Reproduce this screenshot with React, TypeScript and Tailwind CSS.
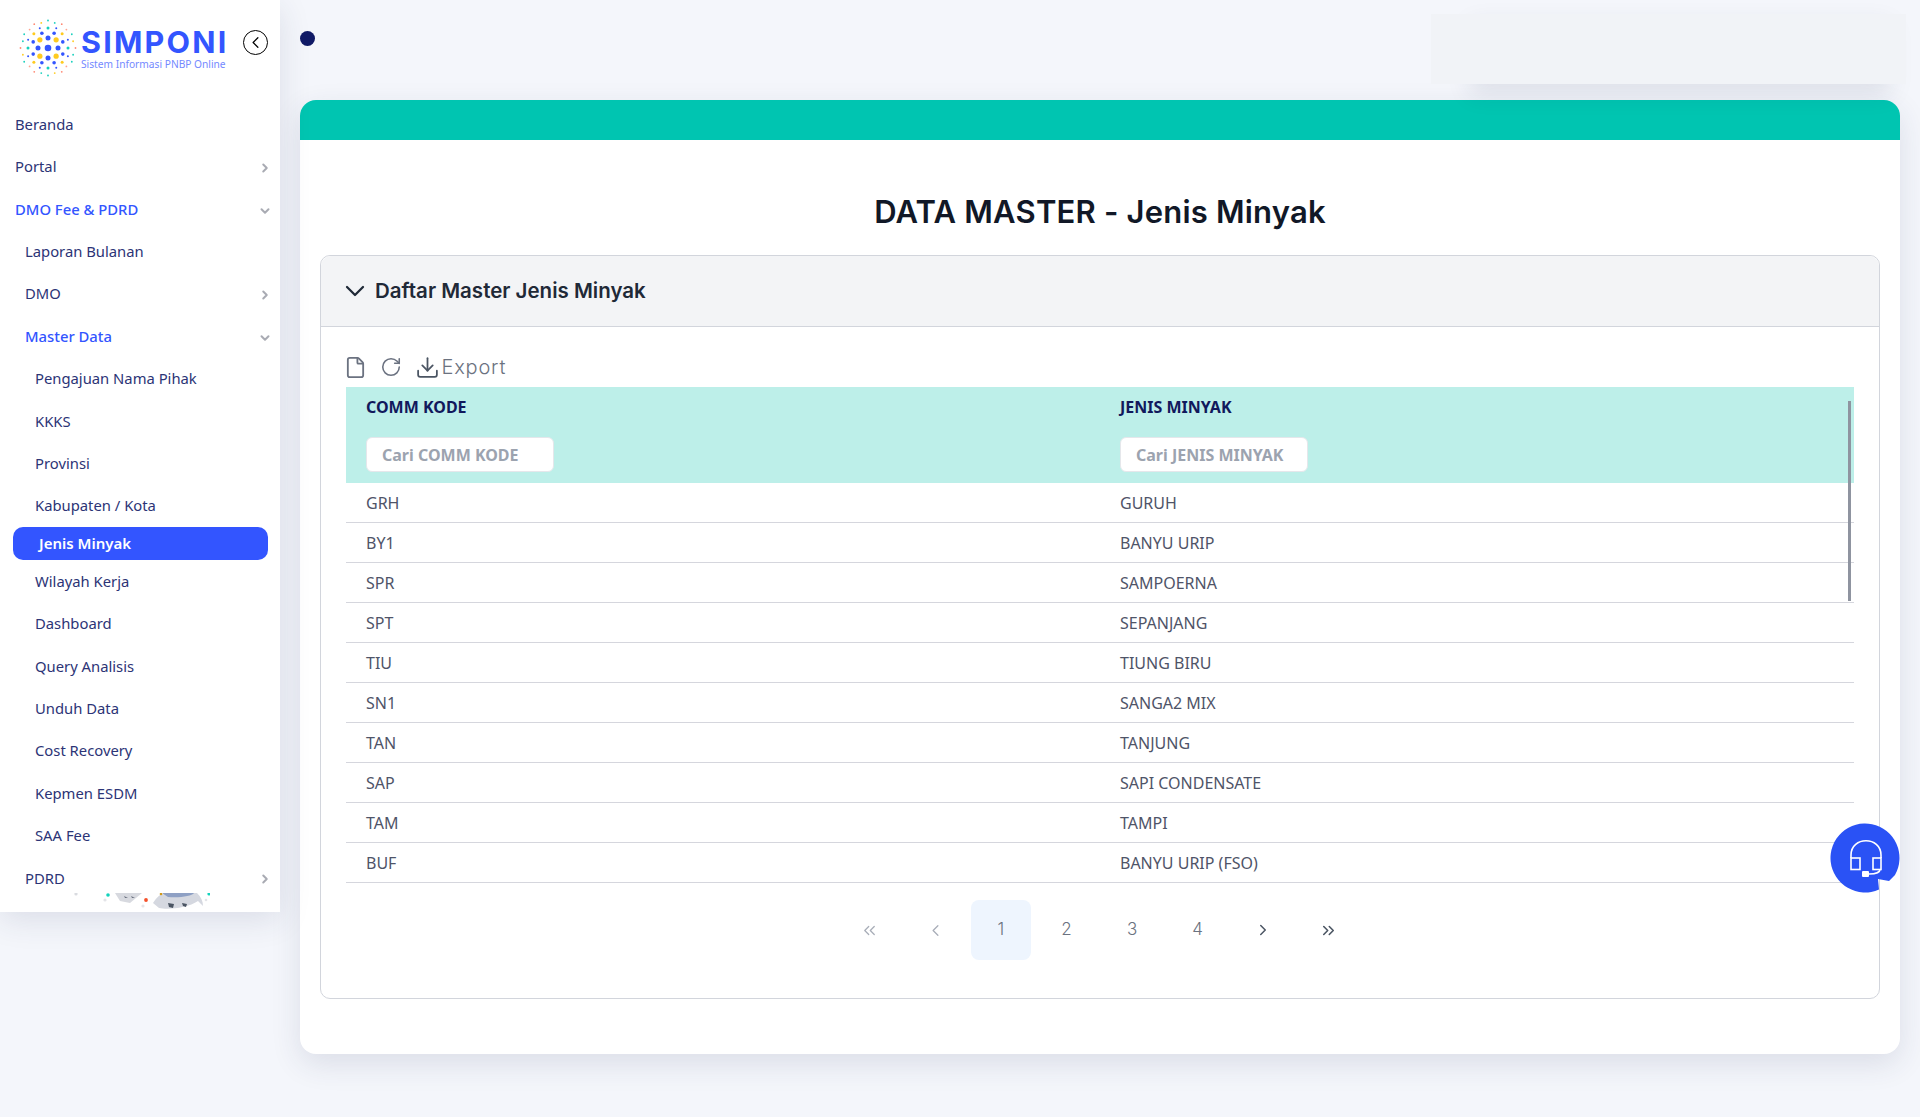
import { ChevronDown, ChevronLeft, ChevronRight, ChevronsLeft, ChevronsRight, Download, File, RotateCw } from "lucide-react";

const rows = [
  ["GRH", "GURUH"],
  ["BY1", "BANYU URIP"],
  ["SPR", "SAMPOERNA"],
  ["SPT", "SEPANJANG"],
  ["TIU", "TIUNG BIRU"],
  ["SN1", "SANGA2 MIX"],
  ["TAN", "TANJUNG"],
  ["SAP", "SAPI CONDENSATE"],
  ["TAM", "TAMPI"],
  ["BUF", "BANYU URIP (FSO)"],
];

const rings = [
  { r: 10, n: 4, size: 2.5, start: 0, colors: ["#3355ff"] },
  { r: 11.5, n: 4, size: 2.6, start: 45, colors: ["#ffcb1f"] },
  { r: 16, n: 8, size: 1.8, start: 22.5, colors: ["#3355ff"] },
  { r: 20, n: 4, size: 1.5, start: 0, colors: ["#18d0bd"] },
  { r: 20, n: 4, size: 1.5, start: 45, colors: ["#ffcb1f"] },
  { r: 21.5, n: 8, size: 1, start: 22.5, colors: ["#3355ff"] },
  { r: 26, n: 12, size: 0.9, start: 15, colors: ["#18d0bd", "#ffa48f", "#ffcb1f"] },
  { r: 27.5, n: 12, size: 0.9, start: 0, colors: ["#ff8a75", "#18d0bd"] },
];

function LogoMark() {
  return (
    <svg width="60" height="60" viewBox="-30 -30 60 60" className="shrink-0">
      <circle cx="0" cy="0" r="3.3" fill="#3355ff" />
      {rings.map((ring) =>
        Array.from({ length: ring.n }).map((_, i) => {
          const a = ((ring.start + (360 / ring.n) * i) * Math.PI) / 180;
          return (
            <circle
              key={`${ring.r}-${ring.start}-${i}`}
              cx={ring.r * Math.cos(a)}
              cy={ring.r * Math.sin(a)}
              r={ring.size}
              fill={ring.colors[i % ring.colors.length]}
            />
          );
        })
      )}
    </svg>
  );
}

function Fish() {
  return (
    <svg width="140" height="19" viewBox="0 0 140 19" className="absolute left-[70px] top-0">
      <circle cx="6" cy="1" r="1.6" fill="#d9dbe0" />
      <circle cx="38" cy="2" r="1.8" fill="#14d3bd" />
      <circle cx="35" cy="7" r="1.6" fill="#e3e4e8" />
      <path d="M45 0 L72 0 L66 5 L60 10 L50 8 Z" fill="#d7d9df" />
      <path d="M54 3 L58 5 L55 5 Z M61 3 L65 5 L62 5 Z" fill="#6b7280" />
      <circle cx="76" cy="7" r="1.9" fill="#f4502a" />
      <circle cx="73" cy="13" r="1.6" fill="#e3e4e8" />
      <path d="M83 10 C86 5 90 1 95 0 L127 0 C131 4 133 8 133 13 L128 8 C118 15 98 17 89 15 Z" fill="#d5d8e0" />
      <path d="M92 0 L124 0 C122 3 110 5 98 4 Z" fill="#8ea0c4" />
      <path d="M98 10 L104 11 L103 15 L99 14 Z M112 10 L117 11 L116 14 L113 13 Z" fill="#4b5563" />
      <circle cx="91" cy="1" r="1.3" fill="#d19a1a" />
      <circle cx="139" cy="1" r="1.6" fill="#14d3bd" />
      <circle cx="136" cy="7" r="1.3" fill="#e3e4e8" />
    </svg>
  );
}

function Item({ label, pad, active, chevron }: { label: string; pad: string; active?: boolean; chevron?: "right" | "down" }) {
  return (
    <div className={`flex h-[42.4px] items-center justify-between pr-[8px] text-[14.8px] ${pad} ${active ? "font-medium text-[#3355ff]" : "text-[#2c3476]"}`}>
      <span>{label}</span>
      {chevron === "right" && <ChevronRight className="mt-[3px] h-[14px] w-[14px] text-[#a9abb3]" strokeWidth={3.4} />}
      {chevron === "down" && <ChevronDown className="mt-[5px] h-[14px] w-[14px] text-[#a9abb3]" strokeWidth={3.4} />}
    </div>
  );
}

function Sidebar() {
  return (
    <aside className="relative h-[912px] w-[280px] shrink-0 overflow-hidden bg-white shadow-[0_8px_30px_rgba(40,50,90,0.12)]">
      <div className="flex h-[102.8px] items-start pl-[18px] pt-[18px]">
        <LogoMark />
        <div className="ml-[3px] mt-[8px] w-[148px]">
          <div className="text-[30.5px] font-bold leading-[32px] tracking-[2.2px] text-[#3355ff]" style={{ fontFamily: "Inter, sans-serif" }}>SIMPONI</div>
          <div className="whitespace-nowrap text-[10.2px] leading-[13px] text-[#7489ff]">Sistem Informasi PNBP Online</div>
        </div>
        <div className="absolute left-[243px] top-[30px] flex h-[25px] w-[25px] items-center justify-center rounded-full border-[1.5px] border-black">
          <ChevronLeft className="h-[19px] w-[19px] text-black" strokeWidth={1.6} />
        </div>
      </div>
      <nav>
        <Item label="Beranda" pad="pl-[15px]" />
        <Item label="Portal" pad="pl-[15px]" chevron="right" />
        <Item label="DMO Fee & PDRD" pad="pl-[15px]" active chevron="down" />
        <Item label="Laporan Bulanan" pad="pl-[25px]" />
        <Item label="DMO" pad="pl-[25px]" chevron="right" />
        <Item label="Master Data" pad="pl-[25px]" active chevron="down" />
        <Item label="Pengajuan Nama Pihak" pad="pl-[35px]" />
        <Item label="KKKS" pad="pl-[35px]" />
        <Item label="Provinsi" pad="pl-[35px]" />
        <Item label="Kabupaten / Kota" pad="pl-[35px]" />
        <div className="mx-[13px] flex h-[33px] w-[255px] items-center rounded-[10px] bg-[#3355ff] pl-[26px] text-[15px] font-semibold text-white">Jenis Minyak</div>
        <Item label="Wilayah Kerja" pad="pl-[35px]" />
        <Item label="Dashboard" pad="pl-[35px]" />
        <Item label="Query Analisis" pad="pl-[35px]" />
        <Item label="Unduh Data" pad="pl-[35px]" />
        <Item label="Cost Recovery" pad="pl-[35px]" />
        <Item label="Kepmen ESDM" pad="pl-[35px]" />
        <Item label="SAA Fee" pad="pl-[35px]" />
        <Item label="PDRD" pad="pl-[25px]" chevron="right" />
      </nav>
      <div className="absolute bottom-0 left-0 h-[19px] w-full">
        <Fish />
      </div>
    </aside>
  );
}

function ChatButton() {
  return (
    <svg width="70" height="70" viewBox="0 0 70 70" className="absolute left-[1830px] top-[823px]">
      <path d="M65 52 A34.5 34.5 0 1 0 49 66.5 L48 56 L59 58 Z" fill="#2a52f5" />
      <g fill="none" stroke="#fff" strokeWidth="1.6">
        <path d="M21 35 V32 C21 13 51 13 51 32 V35" />
        <rect x="21" y="35" width="9" height="11.5" />
        <rect x="43" y="35" width="8" height="11.5" />
        <path d="M50 46.5 C50 49 46 51 39 51" />
      </g>
      <rect x="32" y="48" width="7" height="6" rx="1" fill="#fff" />
    </svg>
  );
}

function Pager() {
  const cell = "flex h-[60px] w-[60px] items-center justify-center rounded-[8px] text-[#6b7280]";
  return (
    <div className="flex justify-center gap-[5.6px] pr-[1.5px] pt-[17px] text-[17px]" style={{ fontFamily: "Inter, sans-serif", fontWeight: 300 }}>
      <div className={`${cell} text-[#a8adb8]`}><ChevronsLeft className="h-[19px] w-[19px]" strokeWidth={1.6} /></div>
      <div className={`${cell} text-[#a8adb8]`}><ChevronLeft className="h-[19px] w-[19px]" strokeWidth={1.6} /></div>
      <div className={`${cell} bg-[#eef5fe]`}>1</div>
      <div className={cell}>2</div>
      <div className={cell}>3</div>
      <div className={cell}>4</div>
      <div className={cell}><ChevronRight className="h-[18px] w-[18px] text-[#4b5563]" strokeWidth={2} /></div>
      <div className={cell}><ChevronsRight className="h-[19px] w-[19px] text-[#4b5563]" strokeWidth={2} /></div>
    </div>
  );
}

export default function App() {
  return (
    <div className="relative flex min-h-[1117px] bg-[#f4f6fb]" style={{ fontFamily: "'Noto Sans', sans-serif" }}>
      <Sidebar />
      <main className="w-[1640px] shrink-0 pl-[20px] pr-[20px]">
        <div className="relative flex h-[100px] items-start">
          <div className="mt-[31px] h-[15px] w-[15px] rounded-full bg-[#101a66]" />
          <div className="absolute left-[1170px] top-[14px] h-[70px] w-[420px] bg-[#f1f3f7] shadow-[0_10px_24px_rgba(30,40,80,0.1)]" />
          <div className="absolute left-[1131px] top-[14px] h-[70px] w-[475px] bg-[#f1f3f7]" />
        </div>
        <section className="h-[954px] w-[1600px] overflow-hidden rounded-[16px] bg-white shadow-[0_10px_30px_rgba(40,50,90,0.12)]">
          <div className="h-[40px] bg-[#00c5b1]" />
          <h1 className="pb-[23px] pt-[52px] text-center text-[31px] font-semibold leading-[40px] tracking-[0.2px] text-[#111827]" style={{ fontFamily: "Inter, sans-serif" }}>
            DATA MASTER - Jenis Minyak
          </h1>
          <div className="mx-[20px] h-[744px] w-[1560px] rounded-[10px] border border-[#d2d5dc]">
            <div className="flex h-[71px] items-center gap-[4px] rounded-t-[10px] border-b border-[#d2d5dc] bg-[#f3f4f6] pl-[18px] text-[20.5px] font-semibold text-[#1f2937]" style={{ fontFamily: "Inter, sans-serif" }}>
              <ChevronDown className="h-[32px] w-[32px]" strokeWidth={1.7} />
              Daftar Master Jenis Minyak
            </div>
            <div className="relative px-[25px]">
              <div className="-ml-[2.5px] flex h-[60px] items-center gap-[13px] pt-[20px] text-[#6b7280]">
                <File className="h-[23px] w-[23px]" strokeWidth={1.9} />
                <RotateCw className="h-[22px] w-[22px]" strokeWidth={1.7} />
                <div className="flex items-center gap-[2px] text-[20px] font-light tracking-[0.8px]" style={{ fontFamily: "Inter, sans-serif" }}>
                  <Download className="h-[25px] w-[25px] text-[#4b5563]" strokeWidth={1.7} />
                  Export
                </div>
              </div>
              <div className="grid h-[96px] w-[1508px] grid-cols-[754px_754px] bg-[#bdefe9] pt-[9px]">
                {["COMM KODE", "JENIS MINYAK"].map((h) => (
                  <div key={h} className="pl-[20px]">
                    <div className="text-[16px] font-bold leading-[22px] text-[#11195c]">{h}</div>
                    <div className="mt-[19px] flex h-[35px] w-[188px] items-center rounded-[6px] border border-[#e5e7eb] bg-white pl-[15px] text-[16px] font-bold text-[#9ca3af]">
                      Cari {h}
                    </div>
                  </div>
                ))}
              </div>
              {rows.map(([code, name]) => (
                <div key={code} className="grid h-[40px] w-[1508px] grid-cols-[754px_754px] items-center border-b border-[#d5d6dd] text-[16px] text-[#4f5468]">
                  <div className="pl-[20px]">{code}</div>
                  <div className="pl-[20px]">{name}</div>
                </div>
              ))}
              <div className="absolute left-[1527px] top-[74px] h-[200px] w-[3px] bg-[#8f94a0]" />
              <Pager />
            </div>
          </div>
        </section>
      </main>
      <ChatButton />
    </div>
  );
}
